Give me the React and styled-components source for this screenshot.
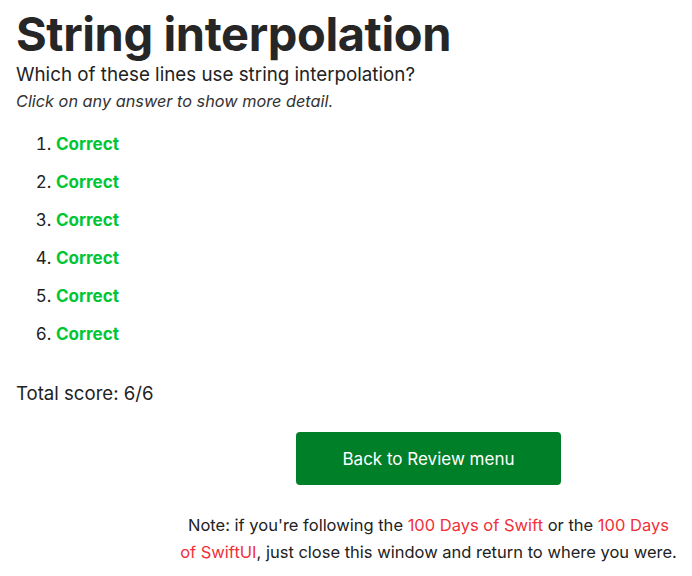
import React from "react"
import styled, { createGlobalStyle } from "styled-components"

const GlobalStyle = createGlobalStyle`
  body {
    margin: 0;
    background: #ffffff;
    font-family: Inter, "Noto Sans", sans-serif;
    color: #222222;
  }
`

const Page = styled.div`
  padding: 0 16px;
`

const Title = styled.h1`
  font-size: 47px;
  font-weight: 700;
  letter-spacing: -0.4px;
  line-height: 1;
  margin: 10px 0 0;
  color: #262626;
`

const Question = styled.p`
  font-size: 18.8px;
  margin: 6px 0 0;
  line-height: 24px;
`

const Hint = styled.p`
  font-size: 16.3px;
  font-style: italic;
  margin: 3px 0 0;
  line-height: 22px;
  color: #333;
`

const Answers = styled.ol`
  margin: 20px 0 0;
  padding-left: 40px;
  font-size: 17px;
  line-height: 24px;
`

const Answer = styled.li`
  margin-bottom: 14px;
  cursor: pointer;
`

const Verdict = styled.span`
  color: ${(p) => (p.$ok ? "#00c635" : "#e0303a")};
  font-weight: 700;
`

const Score = styled.p`
  font-size: 18.6px;
  margin: 35px 0 0;
  line-height: 24px;
`

const Footer = styled.div`
  display: grid;
  grid-template-columns: 1fr 3fr;
  margin-top: 27px;
`

const Column = styled.div`
  grid-column: 2;
  display: flex;
  flex-direction: column;
  align-items: center;
  text-align: center;
`

const Button = styled.button`
  width: 265px;
  height: 53px;
  background: #007f29;
  color: #ffffff;
  border: none;
  border-radius: 4px;
  font-family: inherit;
  font-size: 17px;
  cursor: pointer;
`

const Note = styled.p`
  font-size: 16.5px;
  line-height: 27px;
  margin: 27px -2px 0;
`

const Link = styled.a`
  color: #f0303a;
  text-decoration: none;
`

export default function App() {
  const results = [true, true, true, true, true, true]
  return (
    <Page>
      <GlobalStyle />
      <Title>String interpolation</Title>
      <Question>Which of these lines use string interpolation?</Question>
      <Hint>Click on any answer to show more detail.</Hint>
      <Answers>
        {results.map((ok, i) => (
          <Answer key={i}>
            <Verdict $ok={ok}>{ok ? "Correct" : "Wrong"}</Verdict>
          </Answer>
        ))}
      </Answers>
      <Score>Total score: 6/6</Score>
      <Footer>
        <Column>
          <Button>Back to Review menu</Button>
          <Note>
            Note: if you're following the <Link href="#">100 Days of Swift</Link> or the{" "}
            <Link href="#">100 Days of SwiftUI</Link>, just close this window and return to
            where you were.
          </Note>
        </Column>
      </Footer>
    </Page>
  )
}
